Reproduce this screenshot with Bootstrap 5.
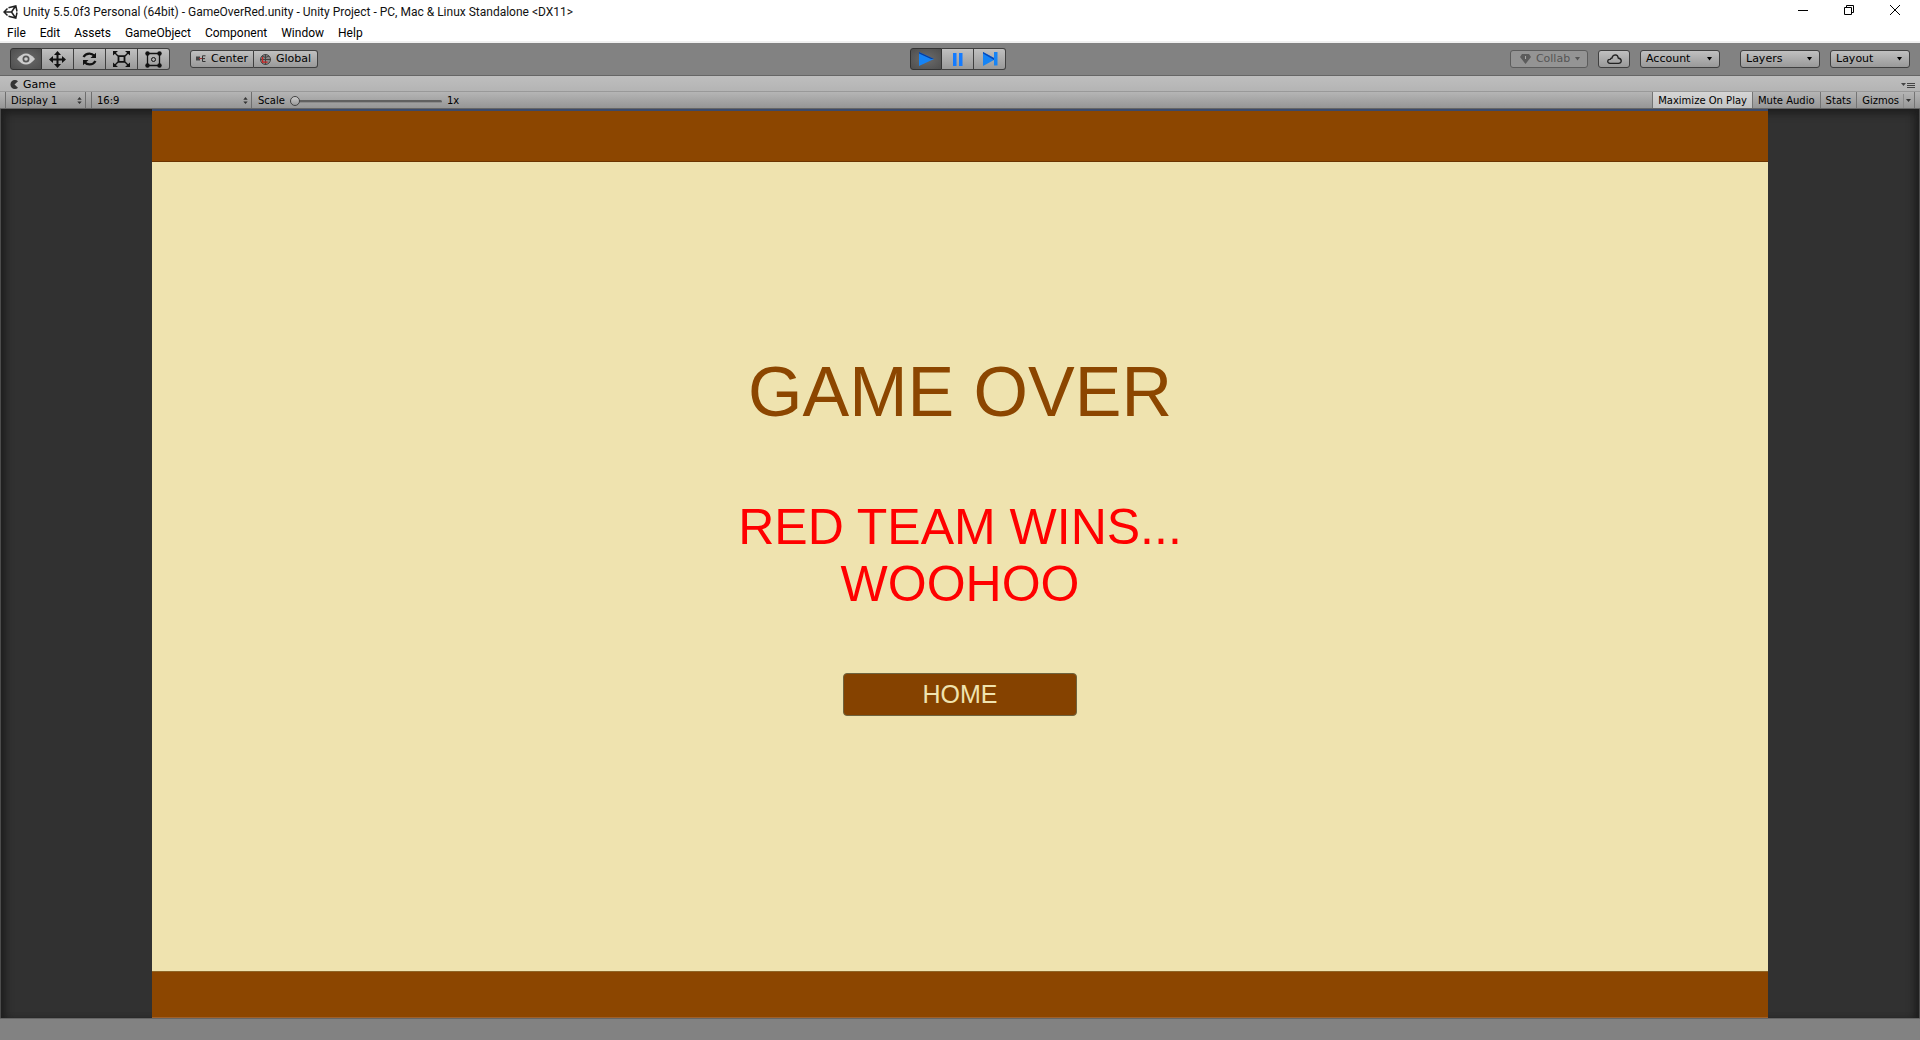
<!DOCTYPE html>
<html lang="en">
<head>
<meta charset="utf-8">
<meta name="viewport" content="width=device-width, initial-scale=1">
<title>Unity 5.5.0f3 Personal (64bit) - GameOverRed.unity</title>
<link href="https://cdn.jsdelivr.net/npm/bootstrap@5.3.0/dist/css/bootstrap.min.css" rel="stylesheet">
<style>
  body { background: #828282; color: #000; font-family: "DejaVu Sans", sans-serif; font-size: 11px; line-height: 16px; }
  svg { display: block; flex: none; }
  .window-head { background: #fff; border-bottom: 2px solid #f0f0f0; font-family: Roboto, "Open Sans", sans-serif; }
  .title-row { height: 23px; padding-left: 3px; gap: 5px; }
  .title-row h1 { font-size: 12px; line-height: 16px; margin: 0; font-weight: 400; color: #111; }
  .win-btn { width: 46px; height: 20px; border: 0; background: none; padding: 0; display: flex; align-items: center; justify-content: center; }
  .win-controls { padding-right: 2px; }
  .menu-row { height: 18px; gap: 14px; padding: 2px 0 0 7px; }
  .menu-row a { color: #000; text-decoration: none; font-size: 12px; }

  .toolbar { height: 33px; padding: 0 10px; background: #828282; border-bottom: 1px solid #666; }
  .tool-gap { gap: 10px; }
  .layout-tools { margin-left: 20px; }
  .tool-btn { height: 18px; padding: 0; border: 1px solid #404040; background: linear-gradient(#c0c0c0, #999); color: #000;
    font-size: 11px; line-height: 16px; border-radius: 3px; display: flex; align-items: center; justify-content: center; gap: 5px; }
  .tool-btn:hover { background: linear-gradient(#c8c8c8, #a4a4a4); color: #000; border-color: #404040; }
  .tool-btn.active, .tool-btn.active:hover { background: radial-gradient(#6c6c6c, #4e4e4e); border-color: #333; }
  .tool-btn.tall { width: 32px; height: 22px; }
  .tool-btn.cloud { width: 32px; }
  .tool-btn.wide { width: 64px; }
  .tool-btn.drop { width: 80px; justify-content: space-between; padding: 0 7px 0 5px; }
  .tool-btn.collab { width: 78px; padding: 0 6px 0 8px; border-color: #5c5c5c; background: #949494; color: #555; opacity: 1; }
  .btn-group > .btn.tool-btn { flex: none; }
  .btn-group > .btn.tool-btn:not(:first-child) { border-left: 0; margin-left: 0; }

  .tab-row { height: 16px; background: linear-gradient(#bebebe, #b4b4b4); border-bottom: 1px solid #999; padding: 2px 5px 0 10px; }
  .tab-row a { color: #000; text-decoration: none; gap: 4px; }
  .view-bar { height: 17px; background: linear-gradient(#b5b5b5, #969696); border-bottom: 1px solid #666; font-size: 10px; line-height: 16px; padding: 0 5px; }
  .view-select { appearance: none; height: 16px; border: solid #6e6e6e; border-width: 0 1px; border-radius: 0; padding: 1px 12px 0 5px;
    font-size: 10px; line-height: 15px; color: #000;
    background: url("data:image/svg+xml,%3Csvg xmlns='http://www.w3.org/2000/svg' viewBox='0 0 5 8'%3E%3Cpath d='M0 3L2.500 0L5 3zM0 5L2.500 8L5 5z' fill='%23333'/%3E%3C/svg%3E") right 3px center / 5px 7px no-repeat; }
  .sel-display { width: 81px; }
  .sel-aspect { width: 161px; margin-left: 5px; }
  .scale-box { padding-top: 2px; margin-left: 6px; gap: 5px; }
  .scale-range { appearance: none; width: 152px; height: 14px; background: none; margin: 0; }
  .scale-range::-webkit-slider-runnable-track { height: 3px; border-radius: 2px; background: #606060; border-bottom: 1px solid #8a8a8a; }
  .scale-range::-webkit-slider-thumb { appearance: none; width: 10px; height: 10px; margin-top: -4px; border-radius: 50%; border: 1px solid #444; background: linear-gradient(#ccc, #999); }
  .view-btn { height: 16px; border: 0; border-left: 1px solid #747474; background: none; padding: 1px 5px 0; font-size: 10px; line-height: 15px; color: #000; }
  .view-btn.active { background: linear-gradient(#d6d6d6, #c2c2c2); }
  .view-btn.gizmos { border-right: 1px solid #747474; gap: 4px; padding-right: 3px; }
  .gizmo-arrow { border-left: 1px solid #8b8b8b; padding: 5px 0 5px 2px; }

  .game-view { background: #313131; border: solid #4c4c4c; border-width: 0 1px; min-height: 0;
    box-shadow: inset 0 8px 8px -4px #1e1e1e, inset 8px 0 8px -4px #1e1e1e, inset -8px 0 8px -4px #1e1e1e; }
  .stage { height: 100%; aspect-ratio: 16 / 9; background: #efe3af; border-top: 2px solid #3b4a6b; color: #8c4600; font-family: "Liberation Sans", Arial, sans-serif; }
  .band { background: #8c4600; }
  .band-top { height: 51px; border-bottom: 1px solid #6b3400; }
  .band-bottom { height: 47px; border-top: 1px solid #8f6526; border-bottom: 1px solid #a0602a; }
  .stage-body { padding-top: 190px; }
  .stage-title { font-size: 70px; line-height: 80px; margin: 0 0 67px; font-weight: 400; }
  .stage-result { font-size: 50px; line-height: 57px; margin: 0 0 60px; color: #f00; }
  .home-btn { width: 234px; height: 43px; padding: 0; border: 1px solid #6f643f; border-radius: 4px; background: #854200; color: #efe3af; font-size: 25px; line-height: 41px; }
  .home-btn:hover { background: #793c00; color: #efe3af; border-color: #6f643f; }
  .status-bar { height: 22px; background: #828282; border-top: 1px solid #666; }
</style>
</head>
<body class="vh-100 d-flex flex-column overflow-hidden">

<header class="window-head">
  <div class="title-row d-flex align-items-center">
    <svg width="15" height="14" viewBox="0 0 15 14" fill="none" stroke="#222" stroke-width="1.500"><path d="M5.500 2.800L12.800 .9L14 6.500M5.500 11.200L12.800 13.100L14 7.500M4.500 3.500L1 7L4.500 10.500M1 7H8.500M8.500 7L12.300 1.500M8.500 7L12.300 12.500"/></svg>
    <h1>Unity 5.5.0f3 Personal (64bit) - GameOverRed.unity - Unity Project - PC, Mac &amp; Linux Standalone &lt;DX11&gt;</h1>
    <div class="win-controls d-flex ms-auto align-self-start">
      <button class="win-btn" aria-label="Minimize"><svg width="10" height="10" stroke="#000"><path d="M0 5.500H10"/></svg></button>
      <button class="win-btn" aria-label="Restore"><svg width="10" height="10" fill="none" stroke="#000"><path d="M.5 2.500H7.500V9.500H.5zM2.500 2.500V.5H9.500V7.500H7.500"/></svg></button>
      <button class="win-btn" aria-label="Close"><svg width="10" height="10" stroke="#000"><path d="M0 0L10 10M10 0L0 10"/></svg></button>
    </div>
  </div>
  <nav class="menu-row d-flex align-items-center" aria-label="Main menu">
    <a href="#">File</a><a href="#">Edit</a><a href="#">Assets</a><a href="#">GameObject</a><a href="#">Component</a><a href="#">Window</a><a href="#">Help</a>
  </nav>
</header>

<div class="toolbar d-flex align-items-center">
  <div class="d-flex align-items-center flex-fill w-50">
    <div class="btn-group" role="group" aria-label="Transform tools">
      <button class="btn tool-btn tall active" aria-label="View"><svg width="18" height="12" viewBox="0 0 18 12"><path d="M0 6Q9-5 18 6Q9 17 0 6z" fill="#ccc"/><circle cx="9" cy="6" r="3.500" fill="#555"/><circle cx="9" cy="6" r="1.800" fill="#ccc"/></svg></button>
      <button class="btn tool-btn tall" aria-label="Move"><svg width="17" height="17" viewBox="0 0 17 17"><path d="M8.500 0L12 4H9.500V7.500H13V5L17 8.500L13 12V9.500H9.500V13H12L8.500 17L5 13H7.500V9.500H4V12L0 8.500L4 5V7.500H7.500V4H5z" fill="#111"/></svg></button>
      <button class="btn tool-btn tall" aria-label="Rotate"><svg width="15" height="14" viewBox="0 0 15 14" fill="none" stroke="#111" stroke-width="2.200"><path d="M1.500 5Q3.500 1.500 7.500 1.600Q10.500 1.700 12 3.500M13.500 9Q11.500 12.500 7.500 12.400Q4.500 12.300 3 10.500"/><path d="M14 .8V6H8.500zM1 13.200V8H6.500z" fill="#111" stroke="none"/></svg></button>
      <button class="btn tool-btn tall" aria-label="Scale"><svg width="17" height="16" viewBox="0 0 17 16"><path d="M5.500 5.200H11.500V10.800H5.500z" fill="none" stroke="#111" stroke-width="1.800"/><path d="M1.500 1.500L5 5M15.500 1.500L12 5M1.500 14.500L5 11M15.500 14.500L12 11" stroke="#111" stroke-width="1.400"/><path d="M0 0H5L0 4.500zM17 0H12L17 4.500zM0 16H5L0 11.500zM17 16H12L17 11.500z" fill="#111"/></svg></button>
      <button class="btn tool-btn tall" aria-label="Rect"><svg width="17" height="17" viewBox="0 0 17 17" fill="none" stroke="#111"><path d="M2.500 2.500H14.500V14.500H2.500z" stroke-width="1.300"/><circle cx="8.500" cy="8.500" r="2"/><g fill="#111" stroke="none"><circle cx="2.500" cy="2.500" r="2.200"/><circle cx="14.500" cy="2.500" r="2.200"/><circle cx="2.500" cy="14.500" r="2.200"/><circle cx="14.500" cy="14.500" r="2.200"/></g></svg></button>
    </div>
    <div class="btn-group ms-3 ps-1" role="group" aria-label="Handle position">
      <button class="btn tool-btn wide"><svg width="10" height="8" viewBox="0 0 10 8"><path d="M0 1.500H4V5.500H0z" fill="#444"/><path d="M9.500 .8H6.500V6.500H9.500M7 3.600H9" fill="none" stroke="#333"/><path d="M3 3H6V4H3z" fill="#a33"/></svg>Center</button>
      <button class="btn tool-btn wide"><svg width="11" height="11" viewBox="0 0 11 11" fill="none" stroke="#444"><circle cx="5.500" cy="5.500" r="5" fill="#888"/><path d="M5.500 0V11M0 5.500H11M2 2Q5.500 5 9 2"/><path d="M2.500 3V8.200H7.500" stroke="#c22" stroke-width="1.300"/></svg>Global</button>
    </div>
  </div>
  <div class="btn-group me-1" role="group" aria-label="Playback">
    <button class="btn tool-btn tall active" aria-label="Play"><svg width="16" height="14" viewBox="0 0 16 14"><path d="M1 0L16 7L1 14z" fill="#1684f5"/><path d="M1 0L16 7L13 7L1 1.500z" fill="#083c9c"/></svg></button>
    <button class="btn tool-btn tall" aria-label="Pause"><svg width="10" height="13" viewBox="0 0 10 13"><path d="M0 0H3.500V13H0zM6 0H9.500V13H6z" fill="#147bff"/></svg></button>
    <button class="btn tool-btn tall" aria-label="Step"><svg width="16" height="14" viewBox="0 0 16 14"><path d="M1 0L12 6V0H15.500V13.500H12V8L1 14z" fill="#1684f5"/><path d="M1 0L12 6V8L1 1.500z" fill="#0848b8"/></svg></button>
  </div>
  <div class="d-flex align-items-center justify-content-end flex-fill w-50">
    <div class="d-flex tool-gap">
      <button class="btn tool-btn collab" disabled><svg width="11" height="10" viewBox="0 0 11 10"><path d="M2 0H9L11 3L5.500 10L0 3z" fill="#5c5c5c"/><path d="M5 2H6V5H5z" fill="#aaa"/></svg>Collab<svg width="5" height="4"><path d="M0 0H5L2.500 3.500z" fill="#555"/></svg></button>
      <button class="btn tool-btn cloud" aria-label="Cloud services"><svg width="15" height="10" viewBox="0 0 15 10" fill="none" stroke="#222" stroke-width="1.300"><path d="M3 9.300Q.7 9 .7 7.200Q.9 5.200 3.300 5.300Q3.800 4 5 4Q5.500 .8 8.500 .8Q11 1 11.200 4Q14.300 4.800 14.300 7Q14 9.300 11.500 9.300z"/></svg></button>
      <button class="btn tool-btn drop">Account<svg width="5" height="4"><path d="M0 0H5L2.500 3.500z"/></svg></button>
    </div>
    <div class="d-flex tool-gap layout-tools">
      <button class="btn tool-btn drop">Layers<svg width="5" height="4"><path d="M0 0H5L2.500 3.500z"/></svg></button>
      <button class="btn tool-btn drop">Layout<svg width="5" height="4"><path d="M0 0H5L2.500 3.500z"/></svg></button>
    </div>
  </div>
</div>

<div class="tab-row d-flex align-items-center justify-content-between">
  <a href="#" class="d-flex align-items-center"><svg width="9" height="9" viewBox="0 0 9 9"><path d="M8 1.200A4.500 4.500 0 1 0 8 7.800L4.500 4.500z" fill="#333"/></svg>Game</a>
  <svg width="14" height="8" viewBox="0 0 14 8"><path d="M0 2H5L2.500 5z" fill="#444"/><path d="M6 2.500H14M6 4.500H14M6 6.500H14" stroke="#444"/></svg>
</div>

<div class="view-bar d-flex align-items-center">
  <select class="view-select sel-display" aria-label="Display"><option>Display 1</option></select>
  <select class="view-select sel-aspect" aria-label="Aspect ratio"><option>16:9</option></select>
  <div class="scale-box d-flex align-items-center">
    <label for="scale">Scale</label>
    <input id="scale" class="scale-range" type="range" min="1" max="5" value="1">
    <span>1x</span>
  </div>
  <div class="d-flex ms-auto">
    <button class="view-btn active">Maximize On Play</button>
    <button class="view-btn">Mute Audio</button>
    <button class="view-btn">Stats</button>
    <button class="view-btn gizmos d-flex align-items-center">Gizmos<span class="gizmo-arrow"><svg width="5" height="4"><path d="M0 0H5L2.500 3z" fill="#333"/></svg></span></button>
  </div>
</div>

<main class="game-view flex-grow-1 d-flex justify-content-center">
  <section class="stage d-flex flex-column">
    <div class="band band-top"></div>
    <div class="stage-body flex-grow-1 d-flex flex-column align-items-center text-center">
      <h2 class="stage-title">GAME OVER</h2>
      <p class="stage-result">RED TEAM WINS...<br>WOOHOO</p>
      <button class="btn home-btn">HOME</button>
    </div>
    <div class="band band-bottom"></div>
  </section>
</main>
<footer class="status-bar"></footer>

<script src="https://cdn.jsdelivr.net/npm/bootstrap@5.3.0/dist/js/bootstrap.bundle.min.js"></script>
</body>
</html>
